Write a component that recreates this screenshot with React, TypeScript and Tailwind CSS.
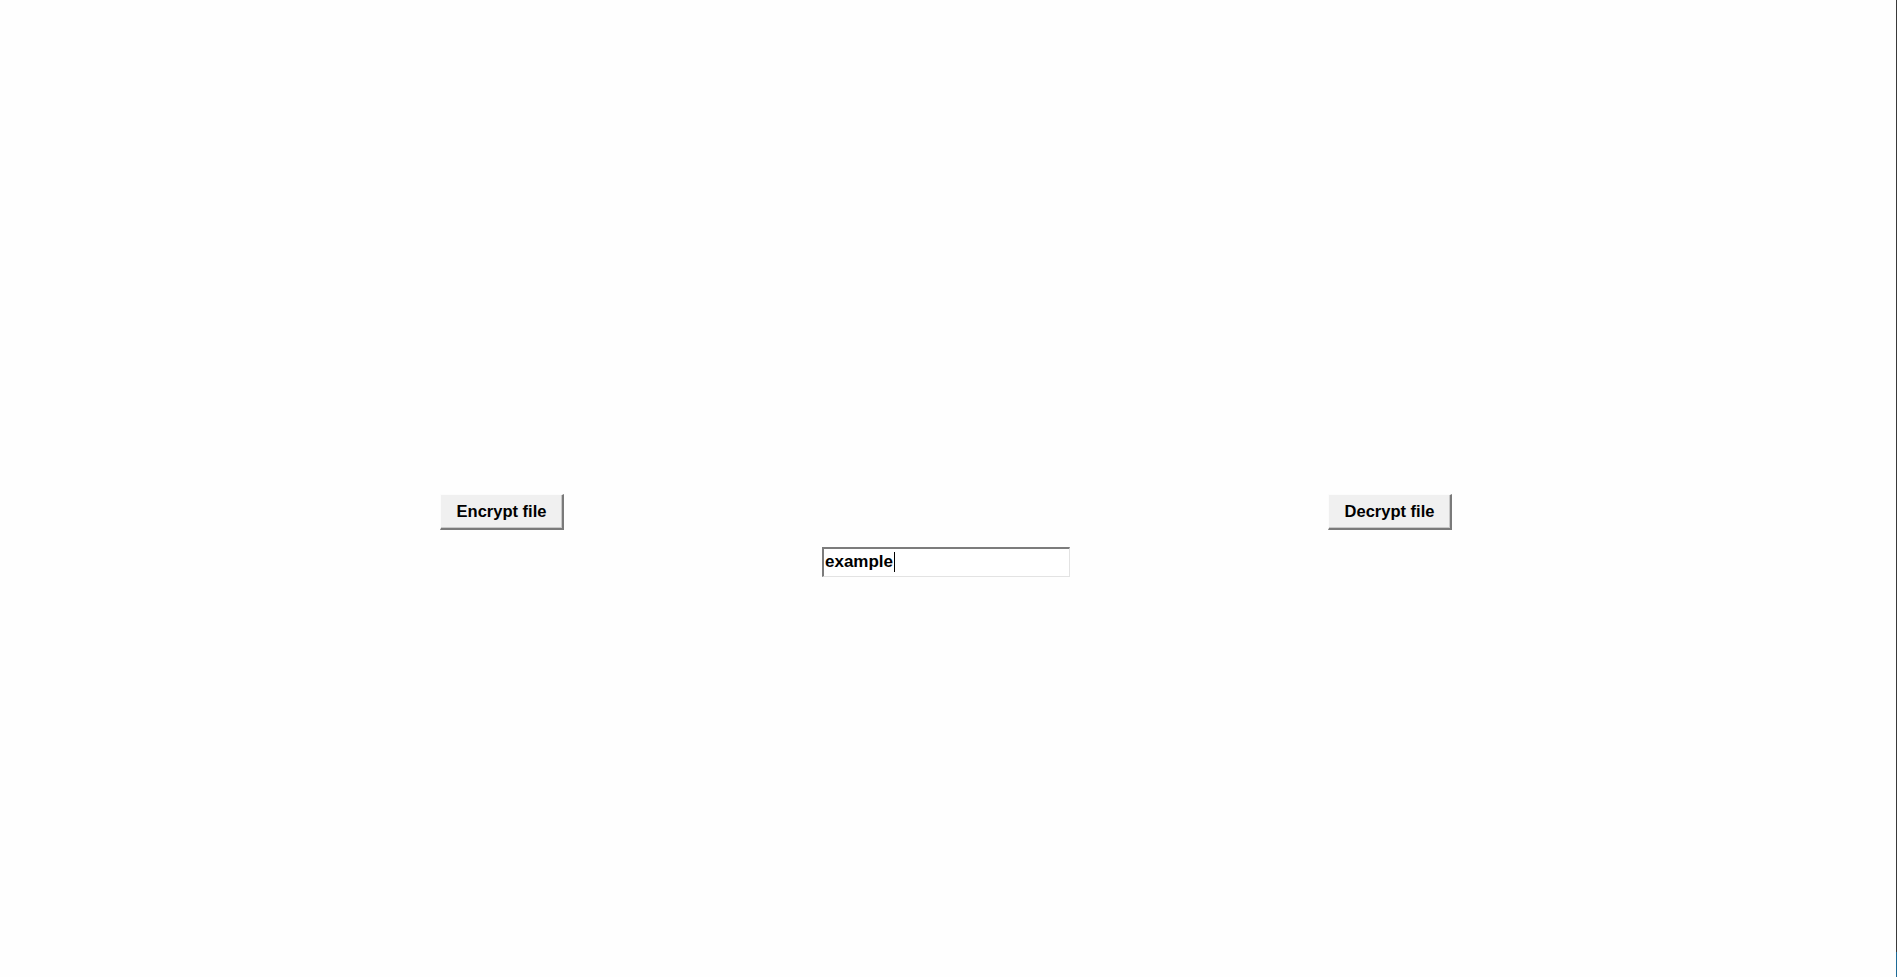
import React from "react";

// Classic sunken/raised widgets, like a small Tk window
const buttonClass =
  "w-[124px] h-[36px] bg-[#f0f0f0] text-black font-bold text-[16.5px] border-t border-l border-t-[#fcfcfc] border-l-[#fcfcfc] border-b-2 border-r-2 border-b-[#7a7a7a] border-r-[#7a7a7a] shadow-[inset_-1px_-1px_0_#c8c8c8] flex items-center justify-center leading-none";

const App = () => {
  return (
    <div
      className="flex w-full h-[977px] bg-[#fefefe]"
      style={{ fontFamily: '"Liberation Sans", Arial, sans-serif' }}
    >
      {/* Main area */}
      <div className="flex-1 flex flex-col pt-[494px] pl-[440px]">
        {/* Buttons row */}
        <div className="flex items-start">
          <button className={buttonClass}>Encrypt file</button>
          <button className={`${buttonClass} ml-[764px]`}>Decrypt file</button>
        </div>

        {/* Entry */}
        <div className="mt-[17px] ml-[382px] w-[248px] h-[30px] bg-white border-t-2 border-l-2 border-t-[#7c7c7c] border-l-[#7c7c7c] border-b border-r border-b-[#e3e3e3] border-r-[#e3e3e3] flex items-center pl-px pb-[2px]">
          <span className="font-bold text-[17px] text-black leading-none">example</span>
          <span className="w-px h-[20px] bg-black ml-px" />
        </div>
      </div>

      {/* Window edge */}
      <div className="w-px flex flex-col">
        <div className="flex-1 bg-[#3a3a3a]" />
        <div className="h-[25px] bg-[#1d6a96]" />
      </div>
    </div>
  );
};

export default App;
